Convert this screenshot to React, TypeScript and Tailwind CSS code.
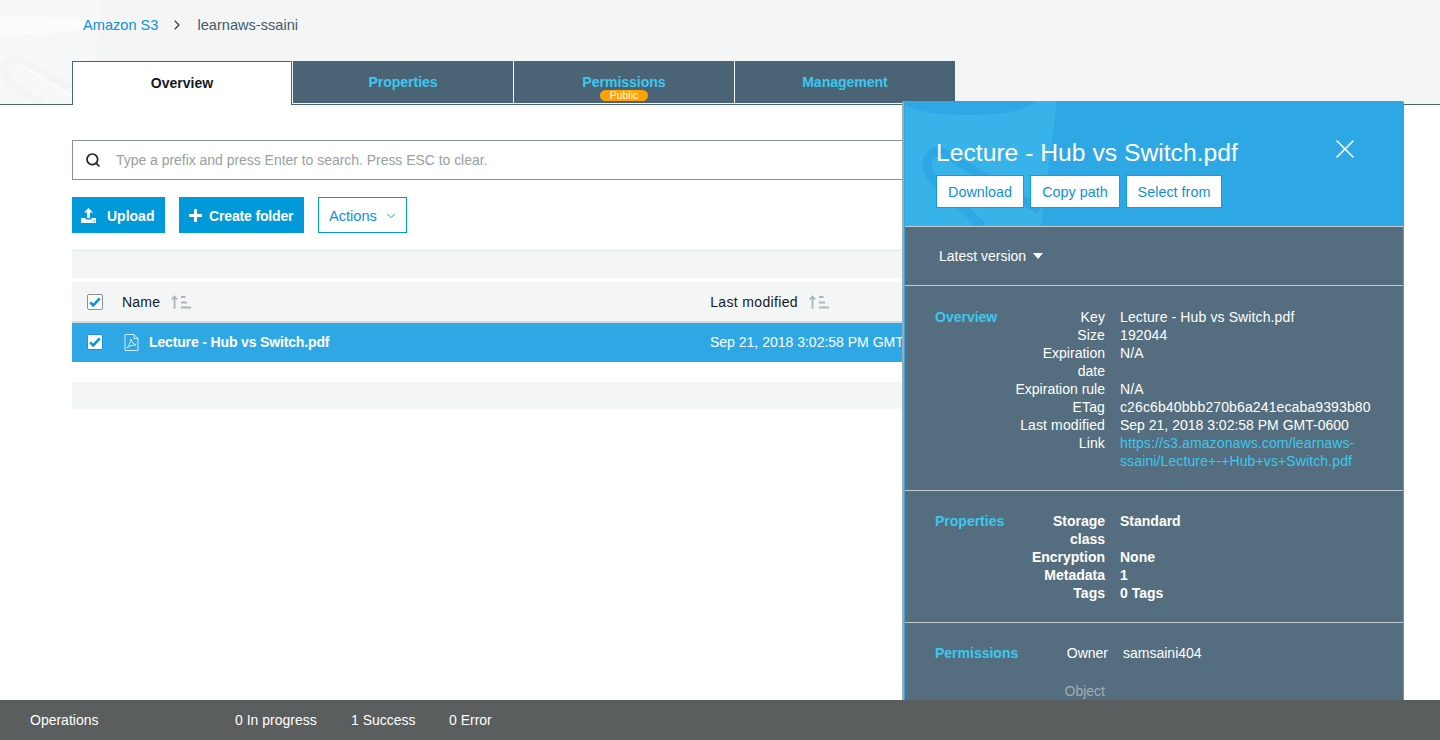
import { ChevronDown, ChevronRight, Search, X } from 'lucide-react';

const overviewRows = [
  { k: <span className="tracking-normal">Expiration<br />date</span>, v: 'N/A' },
  { k: <span className="tracking-normal">Expiration rule</span>, v: 'N/A' },
  { k: 'ETag', v: 'c26c6b40bbb270b6a241ecaba9393b80' },
  { k: 'Last modified', v: <span className="tracking-normal">Sep 21, 2018 3:02:58 PM GMT-0600</span> },
];

const propertyRows = [
  { k: <>Storage<br />class</>, v: 'Standard' },
  { k: 'Encryption', v: 'None' },
  { k: 'Metadata', v: '1' },
  { k: 'Tags', v: '0 Tags' },
];

function SortIcon() {
  return (
    <svg width="20" height="14" viewBox="0 0 20 14" fill="none" stroke="#aab7b8" strokeWidth="1.8" className="block">
      <path d="M3.5 14V1.5M.8 4.5l2.7-3 2.7 3" />
      <path d="M10 2h4.5M10 7.5h6M10 12.5h10" />
    </svg>
  );
}

function Check({ blue }: { blue?: boolean }) {
  return (
    <span className={`flex h-4 w-4 items-center justify-center rounded-[2px] bg-white border ${blue ? 'border-[#1f8fe0]' : 'border-[#879196]'}`}>
      <svg width="12" height="10" viewBox="0 0 12 10" fill="none" stroke="#0a96dd" strokeWidth="2.6">
        <path d="M1.2 5.4l3 3L10.8 1.4" />
      </svg>
    </span>
  );
}

function Tab({ label, badge }: { label: string; badge?: boolean }) {
  return (
    <div className="relative flex h-[42px] w-[220px] items-center justify-center bg-[#4b6475] text-sm font-bold text-[#3cc8f0]">
      {label}
      {badge && (
        <span className="absolute left-[86px] top-[29px] flex h-[11px] w-[48px] items-center justify-center rounded-full bg-[#ffa300] text-[10.5px] leading-none font-normal text-white">
          Public
        </span>
      )}
    </div>
  );
}

function DetailRow({ k, v, bold }: { k: React.ReactNode; v: React.ReactNode; bold?: boolean }) {
  return (
    <div className={`flex ${bold ? 'font-bold' : ''}`}>
      <div className="w-[170px] shrink-0 text-right">{k}</div>
      <div className="ml-[15px]">{v}</div>
    </div>
  );
}

function DetailPanel() {
  return (
    <div className="absolute left-[904px] top-[101px] flex h-[599px] w-[500px] flex-col overflow-hidden rounded-t-[2px] border-x border-[#2ea8e4] bg-[#546e7f] text-sm leading-[18px] text-white shadow-[-2px_0_0_#a5a9a9]">
      <div className="relative h-[126px] shrink-0 border-b border-[#c4cccf] bg-[#2ea8e4] px-[31px]">
        <svg className="absolute left-0 top-0" width="500" height="125" viewBox="0 0 500 125" fill="none">
          <path d="M0 0H152L136 125H0Z" fill="#37b3ea" />
          <ellipse cx="63" cy="0" rx="66" ry="14" fill="#2ea8e4" />
          <path d="M134 109L41 53Q29 47 23 58Q19 72 34 84L77 125" stroke="#2ea8e4" strokeWidth="9" />
        </svg>
        <div className="relative mt-[36px] text-[24.7px] leading-8 whitespace-nowrap">Lecture - Hub vs Switch.pdf</div>
        <X className="absolute left-[424px] top-[32px] h-8 w-8" strokeWidth={1.15} />
        <div className="relative mt-[6px] flex text-[14.4px]">
          <button className="h-[33px] w-[88px] border border-[#0f9ce0] bg-white text-[#0f8fd8]">Download</button>
          <button className="ml-[6px] h-[33px] w-[90px] border border-[#0f9ce0] bg-white text-[#0f8fd8]">Copy path</button>
          <button className="ml-[6px] h-[33px] w-[96px] border border-[#0f9ce0] bg-white text-[#0f8fd8]">Select from</button>
        </div>
      </div>
      <div className="flex h-[59px] shrink-0 items-center border-b border-[#c4cccf] pl-[34px]">
        Latest version
        <span className="ml-[7px] h-0 w-0 border-x-[5.5px] border-t-[6px] border-x-transparent border-t-white" />
      </div>
      <div className="relative h-[205px] shrink-0 border-b border-[#c4cccf] pl-[30px] pt-[22px] tracking-[0.12px]">
        <div className="absolute font-bold tracking-normal text-[#3cc8f0]">Overview</div>
        <DetailRow k="Key" v="Lecture - Hub vs Switch.pdf" />
        <DetailRow k="Size" v="192044" />
        {overviewRows.map((r, i) => (
          <DetailRow key={i} k={r.k} v={r.v} />
        ))}
        <DetailRow
          k="Link"
          v={<span className="text-[#3cc8f0]">https://s3.amazonaws.com/learnaws-<br />ssaini/Lecture+-+Hub+vs+Switch.pdf</span>}
        />
      </div>
      <div className="relative h-[132px] shrink-0 border-b border-[#c4cccf] pl-[30px] pt-[21px]">
        <div className="absolute font-bold text-[#3cc8f0]">Properties</div>
        {propertyRows.map((r) => (
          <DetailRow key={r.v} k={r.k} v={r.v} bold />
        ))}
      </div>
      <div className="relative pl-[30px] pt-[21px]">
        <div className="absolute font-bold text-[#3cc8f0]">Permissions</div>
        <div className="flex">
          <div className="w-[173px] shrink-0 text-right">Owner</div>
          <div className="ml-[15px]">samsaini404</div>
        </div>
        <div className="mt-[20px] w-[170px] text-right text-[#a5adb2]">Object</div>
      </div>
    </div>
  );
}

export default function App() {
  return (
    <div className="relative flex h-[740px] w-[1440px] flex-col overflow-hidden bg-white font-['Liberation_Sans',Arial,sans-serif] text-sm text-[#16191f]">
      <div className="relative h-[105px] shrink-0 border-b border-[#4b6475] bg-[#f4f6f6] px-[72px]">
        <svg className="absolute left-0 top-0" width="120" height="104" viewBox="0 0 120 104" fill="none">
          <path d="M0 0H102L90 104H0Z" fill="#f7f9f9" />
          <ellipse cx="28" cy="25" rx="58" ry="9" fill="#fbfcfc" />
          <path d="M100 104L22 62Q10 55 5 66Q2 78 14 86L42 104" stroke="#f4f6f6" strokeWidth="8" />
          <path d="M72 96L20 64" stroke="#fbfcfc" strokeWidth="2" />
        </svg>
        <div className="relative flex h-[50px] items-center pl-[11px] text-[14.6px]">
          <span className="text-[#0f8fd8]">Amazon S3</span>
          <ChevronRight className="ml-[11px] mr-[12px] h-4 w-4 text-[#333]" strokeWidth={1.6} />
          <span className="text-[#44596a]">learnaws-ssaini</span>
        </div>
        <div className="relative mt-[11px] flex items-start gap-px">
          <div className="flex h-[44px] w-[220px] items-center justify-center border-x border-t border-[#4b6475] bg-white pb-[2px] text-sm font-bold text-[#16191f]">
            Overview
          </div>
          <Tab label="Properties" />
          <Tab label="Permissions" badge />
          <Tab label="Management" />
        </div>
      </div>

      <div className="min-h-0 flex-1 px-[72px] pt-[35px]">
        <div className="flex h-10 items-center border border-[#879196] pl-[12px] tracking-[-0.035px] text-[#9aa0a3]">
          <Search className="mr-[15px] h-4 w-4 text-[#222]" strokeWidth={2.6} />
          Type a prefix and press Enter to search. Press ESC to clear.
        </div>
        <div className="mt-[17px] flex">
          <button className="flex h-9 w-[93px] items-center bg-[#0099d9] pl-[9px] pt-[2px] font-bold text-white">
            <svg width="15" height="15" viewBox="0 0 15 15" fill="white" className="mr-[11px] -mt-[2px]">
              <path d="M7.5 0L12 4.5H9V10H6V4.5H3Z" />
              <path d="M0 10H4.5V11.5H10.5V10H15V15H0Z" />
              <path d="M11.5 12.5h1v1h-1zM13 12.5h1v1h-1z" fill="#0099d9" />
            </svg>
            Upload
          </button>
          <button className="ml-[14px] flex h-9 w-[125px] items-center bg-[#0099d9] pl-[10px] pt-[2px] font-bold tracking-[-0.15px] text-white">
            <svg width="13" height="13" viewBox="0 0 13 13" fill="white" className="mr-[7px] -mt-[2px]">
              <path d="M5 0h3v5h5v3H8v5H5V8H0V5h5z" />
            </svg>
            Create folder
          </button>
          <button className="ml-[14px] flex h-9 w-[89px] items-center border border-[#0099d9] pl-[10px] pt-[2px] text-[14.6px] text-[#0f8fd8]">
            Actions
            <ChevronDown className="ml-[7px] h-[14px] w-[14px]" strokeWidth={1.5} />
          </button>
        </div>
        <div className="mt-[17px] h-[28px] border-t border-[#e4e7e7] bg-[#f4f6f6]" />
        <div className="mt-[4px] flex h-[41px] items-center border-b-2 border-[#d5dbdb] bg-[#f4f6f6] pl-[15px]">
          <Check />
          <span className="ml-[19px] tracking-[0.2px]">Name</span>
          <span className="ml-[11px]"><SortIcon /></span>
          <span className="ml-[519px] tracking-[0.35px]">Last modified</span>
          <span className="ml-[11px]"><SortIcon /></span>
        </div>
        <div className="flex h-[39px] items-center bg-[#2ea8e4] pb-[1px] pl-[15px] text-white">
          <Check blue />
          <svg width="15" height="17" viewBox="0 0 15 17" fill="none" stroke="#cfeaf8" strokeWidth="1" className="ml-[21px]">
            <path d="M1 .5H10L14 4.5V16.5H1Z" />
            <path d="M10 .5V4.5H14" />
            <path d="M3 14Q6 11 7 5Q8 10 12 11Q7 10.5 3 14Z" />
          </svg>
          <span className="ml-[10px] w-[181px] whitespace-nowrap font-bold tracking-[-0.15px]">Lecture - Hub vs Switch.pdf</span>
          <span className="ml-[380px] whitespace-nowrap">Sep 21, 2018 3:02:58 PM GMT-0600</span>
        </div>
        <div className="mt-[20px] h-[27px] bg-[#f4f6f6]" />
      </div>

      <div className="flex h-10 shrink-0 items-center bg-[#5a5e5e] pl-[30px] text-white">
        <span className="w-[205px]">Operations</span>
        <span className="w-[116px]">0 In progress</span>
        <span className="w-[98px]">1 Success</span>
        <span>0 Error</span>
      </div>

      <DetailPanel />
    </div>
  );
}
